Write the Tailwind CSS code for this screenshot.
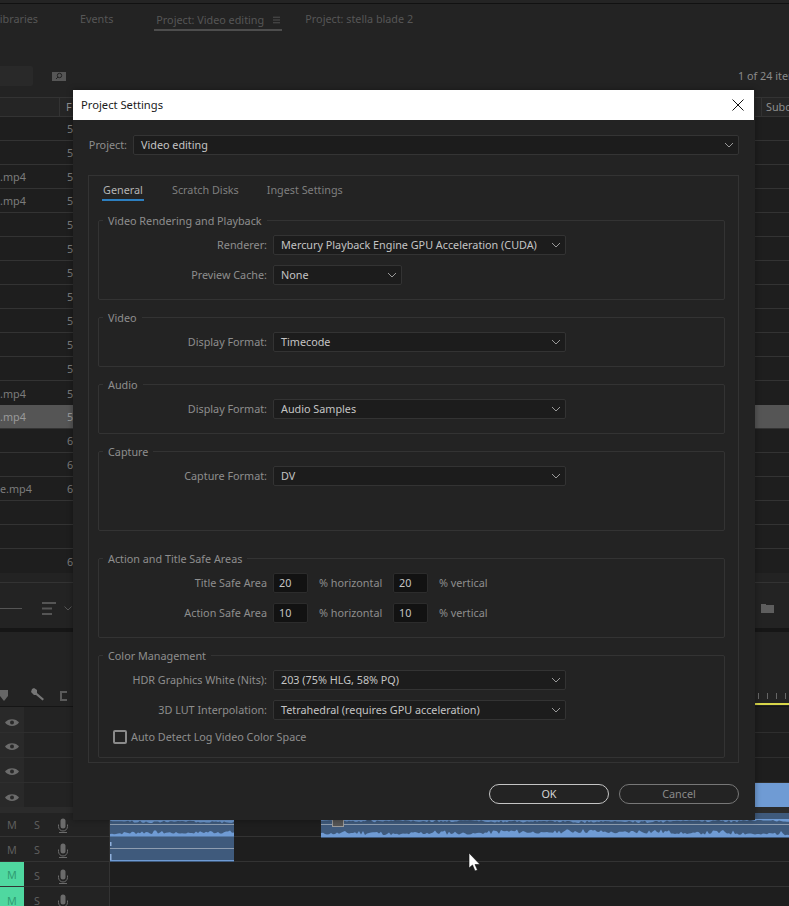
<!DOCTYPE html>
<html>
<head>
<meta charset="utf-8">
<script src="https://cdn.jsdelivr.net/npm/@tailwindcss/browser@4"></script>
</head>
<body class="bg-[#1e1e1e]">
<div class="relative w-[789px] h-[906px] overflow-hidden bg-[#1e1e1e] font-['Noto_Sans',sans-serif] text-[10.8px] leading-none text-[#8e8e8e]">

  <!-- Application behind the dialog -->
  <div class="flex flex-col w-full h-full [&>*]:shrink-0">
    <div class="h-[3px] bg-[#242424]"></div>
    <div class="h-[1px] bg-[#111111]"></div>
    <div class="h-[93px] bg-[#232323] flex flex-col">
      <div class="flex h-[26px] items-end text-[#565656]">
        <span class="w-[88px] -ml-[8px] h-[20px] pt-[4px] text-right pr-[42px] whitespace-nowrap">Libraries</span>
        <span class="h-[20px] pt-[4px]">Events</span>
        <div class="ml-[41px] w-[128px] h-[22px] pt-[6px] pl-[2px] flex gap-[9px] border-b-2 border-[#4d4d4d] relative -mb-[1px] whitespace-nowrap">
          <span>Project: Video editing</span>
          <svg width="9" height="8" viewBox="0 0 9 8" class="mt-[1px] ml-auto mr-[2px]"><path d="M0 .5h9M0 4h9M0 7.500h9" stroke="#5c5c5c"/></svg>
        </div>
        <span class="ml-[23px] h-[20px] pt-[4px]">Project: stella blade 2</span>
      </div>
      <div class="flex items-center h-[20px] mt-[36px]">
        <div class="w-[33px] h-[20px] bg-[#292929] rounded-r-[2px]"></div>
        <div class="ml-[19px] relative w-[14px] h-[9px] bg-[#565656] flex items-center justify-center">
          <svg width="8" height="8" viewBox="0 0 8 8"><circle cx="4.500" cy="3.500" r="2.200" fill="none" stroke="#222"/><path d="M3 5 1 7" stroke="#222"/></svg>
        </div>
        <span class="ml-auto text-[#8a8a8a] whitespace-nowrap w-[51px] overflow-hidden">1 of 24 items</span>
      </div>
    </div>
    <div class="h-[20px] bg-[#252525] border-y border-[#333333] flex items-center relative">
      <div class="w-[60px] h-full border-r border-[#333333]"></div>
      <span class="ml-[6px]">F</span>
      <div class="ml-auto w-[28px] h-full border-l border-[#333333] pl-[4px] pt-[4px] overflow-hidden whitespace-nowrap">Subclip</div>
    </div>
    <div class="flex flex-col [&>*]:pt-[2px]">
      <div class="h-[24px] border-b border-[#333] flex items-center text-[#7c7c7c]"><span class="w-[67px]"></span><span>5</span></div>
      <div class="h-[24px] border-b border-[#333] flex items-center text-[#7c7c7c]"><span class="w-[67px]"></span><span>5</span></div>
      <div class="h-[24px] border-b border-[#333] flex items-center text-[#7c7c7c]"><span class="w-[67px]">.mp4</span><span>5</span></div>
      <div class="h-[24px] border-b border-[#333] flex items-center text-[#7c7c7c]"><span class="w-[67px]">.mp4</span><span>5</span></div>
      <div class="h-[24px] border-b border-[#333] flex items-center text-[#7c7c7c]"><span class="w-[67px]"></span><span>5</span></div>
      <div class="h-[24px] border-b border-[#333] flex items-center text-[#7c7c7c]"><span class="w-[67px]"></span><span>5</span></div>
      <div class="h-[24px] border-b border-[#333] flex items-center text-[#7c7c7c]"><span class="w-[67px]"></span><span>5</span></div>
      <div class="h-[24px] border-b border-[#333] flex items-center text-[#7c7c7c]"><span class="w-[67px]"></span><span>5</span></div>
      <div class="h-[24px] border-b border-[#333] flex items-center text-[#7c7c7c]"><span class="w-[67px]"></span><span>5</span></div>
      <div class="h-[24px] border-b border-[#333] flex items-center text-[#7c7c7c]"><span class="w-[67px]"></span><span>5</span></div>
      <div class="h-[24px] border-b border-[#333] flex items-center text-[#7c7c7c]"><span class="w-[67px]"></span><span>5</span></div>
      <div class="h-[24px] flex items-center text-[#7c7c7c]"><span class="w-[67px]">.mp4</span><span>5</span></div>
      <div class="h-[24px] bg-[#555555] border-b border-[#333] flex items-center text-[#9a9a9a]"><span class="w-[67px]">.mp4</span><span>5</span></div>
      <div class="h-[24px] border-b border-[#333] flex items-center text-[#7c7c7c]"><span class="w-[67px]"></span><span>6</span></div>
      <div class="h-[24px] border-b border-[#333] flex items-center text-[#7c7c7c]"><span class="w-[67px]"></span><span>6</span></div>
      <div class="h-[24px] border-b border-[#333] flex items-center text-[#7c7c7c]"><span class="w-[67px] whitespace-nowrap">e.mp4</span><span>6</span></div>
      <div class="h-[24px] border-b border-[#333] flex items-center text-[#7c7c7c]"></div>
      <div class="h-[24px] border-b border-[#333] flex items-center text-[#7c7c7c]"></div>
      <div class="h-[24px] flex items-center text-[#7c7c7c]"><span class="w-[67px]"></span><span>6</span></div>
    </div>
    <div class="h-[10px] bg-[#232323] border-b border-[#333]"></div>
    <div class="h-[45px] bg-[#232323] flex items-center">
      <div class="w-[22px] h-[1px] bg-[#555] mt-[5px]"></div>
      <svg width="14" height="13" viewBox="0 0 14 13" class="ml-[20px] mt-[5px]"><path d="M0 1h14M0 6.500h10M0 12h10" stroke="#555" stroke-width="2"/></svg>
      <svg width="8" height="5" viewBox="0 0 8 5" class="ml-[8px] mt-[5px]"><path d="M.5.500 4 4 7.500.500" fill="none" stroke="#555"/></svg>
      <svg width="13" height="10" viewBox="0 0 13 10" class="ml-auto mr-[15px] mt-[5px]"><path d="M0 1h5v1h8v8H0z" fill="#5e5e5e"/></svg>
    </div>
    <div class="h-[4px] bg-[#161616]"></div>
    <div class="h-[74px] bg-[#232323] relative flex items-end pb-[5px]">
      <svg width="9" height="11" viewBox="0 0 9 11" class="ml-0"><path d="M0 0h8v6L4 11 0 6z" fill="#666"/></svg>
      <svg width="14" height="14" viewBox="0 0 14 14" class="ml-[22px]"><path d="M1 2 3 1l3 2v3l7 6-1.500 1.500L5 8H3L0 5z" fill="#767676"/></svg>
      <svg width="7" height="10" viewBox="0 0 7 10" class="ml-[15px]"><path d="M7 1H1v8h6" fill="none" stroke="#5a5a5a" stroke-width="2"/></svg>
      <div class="ml-auto w-[35px] h-[6px] flex gap-[8px] pl-[4px] items-start mb-[2px]">
        <div class="w-px h-[6px] bg-[#666]"></div><div class="w-px h-[6px] bg-[#666]"></div><div class="w-px h-[6px] bg-[#666]"></div><div class="w-px h-[6px] bg-[#666]"></div>
      </div>
    </div>
    <div class="h-[1px] bg-[#151515]"></div>
    <!-- video tracks -->
    <div class="flex flex-col h-[100px]">
      <div class="h-[26px] flex border-b border-[#2e2e2e]"><div class="w-[24px] bg-[#292929] flex items-center justify-center pt-[5px]"><svg width="14" height="9" viewBox="0 0 14 9"><path d="M0 4.500C3 0 11 0 14 4.500 11 9 3 9 0 4.500z" fill="#6b6b6b"/><circle cx="7" cy="4.500" r="2" fill="#292929"/></svg></div><div class="w-[86px] bg-[#232323] border-r border-[#2e2e2e]"></div></div>
      <div class="h-[25px] flex border-b border-[#2e2e2e]"><div class="w-[24px] bg-[#292929] flex items-center justify-center pt-[3px]"><svg width="14" height="9" viewBox="0 0 14 9"><path d="M0 4.500C3 0 11 0 14 4.500 11 9 3 9 0 4.500z" fill="#6b6b6b"/><circle cx="7" cy="4.500" r="2" fill="#292929"/></svg></div><div class="w-[86px] bg-[#232323] border-r border-[#2e2e2e]"></div></div>
      <div class="h-[25px] flex border-b border-[#2e2e2e]"><div class="w-[24px] bg-[#292929] flex items-center justify-center pt-[3px]"><svg width="14" height="9" viewBox="0 0 14 9"><path d="M0 4.500C3 0 11 0 14 4.500 11 9 3 9 0 4.500z" fill="#6b6b6b"/><circle cx="7" cy="4.500" r="2" fill="#292929"/></svg></div><div class="w-[86px] bg-[#232323] border-r border-[#2e2e2e]"></div></div>
      <div class="h-[24px] flex"><div class="w-[24px] bg-[#292929] flex items-center justify-center pt-[4px]"><svg width="14" height="9" viewBox="0 0 14 9"><path d="M0 4.500C3 0 11 0 14 4.500 11 9 3 9 0 4.500z" fill="#6b6b6b"/><circle cx="7" cy="4.500" r="2" fill="#292929"/></svg></div><div class="w-[86px] bg-[#232323] border-r border-[#2e2e2e]"></div><div class="ml-auto w-[35px] h-[24px] bg-[#6f9bd4]"></div></div>
    </div>
    <div class="h-[6px] bg-[#2b2b2b]"></div>
    <!-- audio tracks -->
    <div class="flex flex-col">
      <div class="h-[24px] flex border-b border-[#333]">
        <div class="w-[110px] bg-[#232323] flex items-center border-r border-[#2e2e2e] text-[#5e5e5e]"><span class="w-[24px] text-center pt-[2px]">M</span><span class="w-[26px] text-center pt-[2px]">S</span><svg width="10" height="15" viewBox="0 0 10 15" class="ml-[8px] mt-[2px]"><path d="M2.500 3a2.500 2.500 0 0 1 5 0v5a2.500 2.500 0 0 1-5 0z" fill="#6b6b6b"/><path d="M.5 6.500v2a4.500 4.500 0 0 0 9 0v-2M1 14.500h8" fill="none" stroke="#6b6b6b"/></svg></div>
      </div>
      <div class="h-[25px] flex border-b border-[#333]">
        <div class="w-[110px] bg-[#232323] flex items-center border-r border-[#2e2e2e] text-[#5e5e5e]"><span class="w-[24px] text-center pt-[2px]">M</span><span class="w-[26px] text-center pt-[2px]">S</span><svg width="10" height="15" viewBox="0 0 10 15" class="ml-[8px] mt-[2px]"><path d="M2.500 3a2.500 2.500 0 0 1 5 0v5a2.500 2.500 0 0 1-5 0z" fill="#6b6b6b"/><path d="M.5 6.500v2a4.500 4.500 0 0 0 9 0v-2M1 14.500h8" fill="none" stroke="#6b6b6b"/></svg></div>
      </div>
      <div class="h-[25px] flex border-b border-[#333]">
        <div class="w-[110px] bg-[#232323] flex items-center border-r border-[#333] text-[#5e5e5e]"><span class="w-[24px] h-full flex items-center justify-center bg-[#4fd8a0] text-[#2f9c72] pt-[3px]">M</span><span class="w-[26px] text-center pt-[4px]">S</span><svg width="10" height="15" viewBox="0 0 10 15" class="ml-[8px] mt-[4px]"><path d="M2.500 3a2.500 2.500 0 0 1 5 0v5a2.500 2.500 0 0 1-5 0z" fill="#6b6b6b"/><path d="M.5 6.500v2a4.500 4.500 0 0 0 9 0v-2M1 14.500h8" fill="none" stroke="#6b6b6b"/></svg></div>
      </div>
      <div class="h-[25px] flex">
        <div class="w-[110px] bg-[#232323] flex items-center border-r border-[#333] text-[#5e5e5e]"><span class="w-[24px] h-full flex items-center justify-center bg-[#4fd8a0] text-[#2f9c72] pt-[3px]">M</span><span class="w-[26px] text-center pt-[4px]">S</span><svg width="10" height="15" viewBox="0 0 10 15" class="ml-[8px] mt-[4px]"><path d="M2.500 3a2.500 2.500 0 0 1 5 0v5a2.500 2.500 0 0 1-5 0z" fill="#6b6b6b"/><path d="M.5 6.500v2a4.500 4.500 0 0 0 9 0v-2M1 14.500h8" fill="none" stroke="#6b6b6b"/></svg></div>
      </div>
    </div>
  </div>

  <!-- Overlays on the timeline / right edge -->
  <div class="absolute left-[754px] top-[703px] w-[35px] h-[2px] bg-[#d8d64a]"></div>
  <svg class="absolute left-[110px] top-[813px]" width="679" height="50" viewBox="0 0 679 50">
    <rect x="0" y="0" width="124" height="49" fill="#3f5a7c"/>
    <rect x="211" y="0" width="468" height="25" fill="#3f5a7c"/>
    <path id="w1" fill="#6f9bd4"/>
    <path id="w2" fill="#6f9bd4"/>
    <path id="w3" fill="#6f9bd4"/>
    <path id="w4" fill="#6f9bd4"/>
    <rect x="0" y="11" width="124" height="1" fill="#8e9db0"/>
    <rect x="211" y="11" width="468" height="1" fill="#8e9db0"/>
    <rect x="0" y="35" width="124" height="1" fill="#8e9db0"/>
    <rect x="0" y="47" width="124" height="1" fill="#6f9bd4"/>
    <path d="M0 29h1.500v4H0zM0 41h1.500v6H0z" fill="#8fb0dc"/>
    <rect x="222.500" y="6.500" width="11" height="7" fill="#555" stroke="#999"/>
  </svg>
  <svg class="absolute left-[468px] top-[853px]" width="13" height="19" viewBox="0 0 13 19"><path d="M1 0v15l3.500-3 2.500 6 2.500-1-2.500-5.500H12z" fill="#fff" stroke="#111" stroke-width=".6"/></svg>

  <!-- Project Settings dialog -->
  <div class="absolute left-[73px] top-[90px] w-[682px] h-[730px] bg-[#232323] flex flex-col shadow-[0_0_6px_rgba(0,0,0,0.35)]">
    <div class="h-[30px] bg-white flex items-center justify-between pl-[8px] pr-[10px] w-[681px] text-[#1a1a1a] text-[11.2px]">
      <span>Project Settings</span>
      <svg width="12" height="12" viewBox="0 0 12 12" class="-mt-px"><path d="M.5.500l11 11M11.500.500l-11 11" stroke="#111" stroke-width="1"/></svg>
    </div>
    <div class="flex flex-col pl-[15px] pt-[15px]">
      <div class="flex items-center h-[20px] w-[651px]">
        <span class="w-[45px] text-right pr-[6px]">Project:</span>
        <div class="flex-1 h-[20px] bg-[#1c1c1c] border border-[#343434] rounded-[2px] flex items-center justify-between pl-[7px] pr-[4px] text-[#c4c4c4]">
          <span>Video editing</span>
          <svg width="10" height="6" viewBox="0 0 10 6"><path d="M1 1l4 4 4-4" fill="none" stroke="#999"/></svg>
        </div>
      </div>
      <div class="mt-[20px] w-[651px] h-[588px] border border-[#333333] flex flex-col">
        <div class="flex h-[44px] pl-[13px]">
          <div class="w-[42px] h-[25px] pt-[9px] text-center text-[#b4b4b4] border-b-2 border-[#2d7fc0]">General</div>
          <div class="ml-[28px] pt-[9px] text-[#7f7f7f]">Scratch Disks</div>
          <div class="ml-[28px] pt-[9px] text-[#7f7f7f]">Ingest Settings</div>
        </div>
        <div class="flex flex-col pl-[9px] w-[636px]">
          <!-- Video Rendering -->
          <div class="h-[80px] border border-[#333333] rounded-[2px] flex flex-col gap-[10px]">
            <div class="-mt-[8px] ml-[4px] w-fit px-[5px] h-[16px] leading-[16px] bg-[#232323] -mb-[4px]">Video Rendering and Playback</div>
            <div class="flex items-center h-[20px]">
              <span class="w-[168px] text-right">Renderer:</span>
              <div class="ml-[6px] w-[293px] h-[20px] bg-[#1c1c1c] border border-[#333] rounded-[2px] flex items-center justify-between pl-[7px] pr-[4px] text-[#c4c4c4]"><span class="whitespace-nowrap">Mercury Playback Engine GPU Acceleration (CUDA)</span><svg width="10" height="6" viewBox="0 0 10 6"><path d="M1 1l4 4 4-4" fill="none" stroke="#999"/></svg></div>
            </div>
            <div class="flex items-center h-[20px]">
              <span class="w-[168px] text-right">Preview Cache:</span>
              <div class="ml-[6px] w-[129px] h-[20px] bg-[#1c1c1c] border border-[#333] rounded-[2px] flex items-center justify-between pl-[7px] pr-[4px] text-[#c4c4c4]"><span>None</span><svg width="10" height="6" viewBox="0 0 10 6"><path d="M1 1l4 4 4-4" fill="none" stroke="#999"/></svg></div>
            </div>
          </div>
          <!-- Video -->
          <div class="mt-[17px] h-[50px] border border-[#333333] rounded-[2px] flex flex-col gap-[10px]">
            <div class="-mt-[8px] ml-[4px] w-fit px-[5px] h-[16px] leading-[16px] bg-[#232323] -mb-[4px]">Video</div>
            <div class="flex items-center h-[20px]">
              <span class="w-[168px] text-right">Display Format:</span>
              <div class="ml-[6px] w-[293px] h-[20px] bg-[#1c1c1c] border border-[#333] rounded-[2px] flex items-center justify-between pl-[7px] pr-[4px] text-[#c4c4c4]"><span>Timecode</span><svg width="10" height="6" viewBox="0 0 10 6"><path d="M1 1l4 4 4-4" fill="none" stroke="#999"/></svg></div>
            </div>
          </div>
          <!-- Audio -->
          <div class="mt-[17px] h-[50px] border border-[#333333] rounded-[2px] flex flex-col gap-[10px]">
            <div class="-mt-[8px] ml-[4px] w-fit px-[5px] h-[16px] leading-[16px] bg-[#232323] -mb-[4px]">Audio</div>
            <div class="flex items-center h-[20px]">
              <span class="w-[168px] text-right">Display Format:</span>
              <div class="ml-[6px] w-[293px] h-[20px] bg-[#1c1c1c] border border-[#333] rounded-[2px] flex items-center justify-between pl-[7px] pr-[4px] text-[#c4c4c4]"><span>Audio Samples</span><svg width="10" height="6" viewBox="0 0 10 6"><path d="M1 1l4 4 4-4" fill="none" stroke="#999"/></svg></div>
            </div>
          </div>
          <!-- Capture -->
          <div class="mt-[17px] h-[80px] border border-[#333333] rounded-[2px] flex flex-col gap-[10px]">
            <div class="-mt-[8px] ml-[4px] w-fit px-[5px] h-[16px] leading-[16px] bg-[#232323] -mb-[4px]">Capture</div>
            <div class="flex items-center h-[20px]">
              <span class="w-[168px] text-right">Capture Format:</span>
              <div class="ml-[6px] w-[293px] h-[20px] bg-[#1c1c1c] border border-[#333] rounded-[2px] flex items-center justify-between pl-[7px] pr-[4px] text-[#c4c4c4]"><span>DV</span><svg width="10" height="6" viewBox="0 0 10 6"><path d="M1 1l4 4 4-4" fill="none" stroke="#999"/></svg></div>
            </div>
          </div>
          <!-- Safe areas -->
          <div class="mt-[27px] h-[80px] border border-[#333333] rounded-[2px] flex flex-col gap-[10px]">
            <div class="-mt-[8px] ml-[4px] w-fit px-[5px] h-[16px] leading-[16px] bg-[#232323] -mb-[4px]">Action and Title Safe Areas</div>
            <div class="flex items-center h-[20px]">
              <span class="w-[168px] text-right">Title Safe Area</span>
              <div class="ml-[6px] w-[35px] h-[20px] bg-[#121212] border border-[#2c2c2c] rounded-[2px] flex items-center pl-[5px] text-[#c4c4c4]">20</div>
              <span class="ml-[11px] w-[74px]">% horizontal</span>
              <div class="w-[35px] h-[20px] bg-[#121212] border border-[#2c2c2c] rounded-[2px] flex items-center pl-[5px] text-[#c4c4c4]">20</div>
              <span class="ml-[11px]">% vertical</span>
            </div>
            <div class="flex items-center h-[20px]">
              <span class="w-[168px] text-right">Action Safe Area</span>
              <div class="ml-[6px] w-[35px] h-[20px] bg-[#121212] border border-[#2c2c2c] rounded-[2px] flex items-center pl-[5px] text-[#c4c4c4]">10</div>
              <span class="ml-[11px] w-[74px]">% horizontal</span>
              <div class="w-[35px] h-[20px] bg-[#121212] border border-[#2c2c2c] rounded-[2px] flex items-center pl-[5px] text-[#c4c4c4]">10</div>
              <span class="ml-[11px]">% vertical</span>
            </div>
          </div>
          <!-- Color Management -->
          <div class="mt-[17px] h-[103px] border border-[#333333] rounded-[2px] flex flex-col gap-[10px]">
            <div class="-mt-[8px] ml-[4px] w-fit px-[5px] h-[16px] leading-[16px] bg-[#232323] -mb-[4px]">Color Management</div>
            <div class="flex items-center h-[20px]">
              <span class="w-[168px] text-right">HDR Graphics White (Nits):</span>
              <div class="ml-[6px] w-[293px] h-[20px] bg-[#1c1c1c] border border-[#333] rounded-[2px] flex items-center justify-between pl-[7px] pr-[4px] text-[#c4c4c4]"><span>203 (75% HLG, 58% PQ)</span><svg width="10" height="6" viewBox="0 0 10 6"><path d="M1 1l4 4 4-4" fill="none" stroke="#999"/></svg></div>
            </div>
            <div class="flex items-center h-[20px]">
              <span class="w-[168px] text-right">3D LUT Interpolation:</span>
              <div class="ml-[6px] w-[293px] h-[20px] bg-[#1c1c1c] border border-[#333] rounded-[2px] flex items-center justify-between pl-[7px] pr-[4px] text-[#c4c4c4]"><span>Tetrahedral (requires GPU acceleration)</span><svg width="10" height="6" viewBox="0 0 10 6"><path d="M1 1l4 4 4-4" fill="none" stroke="#999"/></svg></div>
            </div>
            <div class="flex items-center h-[14px] pl-[14px]">
              <div class="w-[14px] h-[14px] border-2 border-[#8a8a8a] rounded-[2px]"></div>
              <span class="ml-[4px]">Auto Detect Log Video Color Space</span>
            </div>
          </div>
        </div>
      </div>
      <div class="flex mt-[21px] gap-[10px] pl-[401px]">
        <div class="w-[120px] h-[20px] rounded-full border border-[#c4c4c4] flex items-center justify-center text-[#d4d4d4]">OK</div>
        <div class="w-[120px] h-[20px] rounded-full border border-[#777777] flex items-center justify-center text-[#8a8a8a]">Cancel</div>
      </div>
    </div>
  </div>
</div>
<script>
  function wave(id, x0, x1, base, amp, up, seed) {
    var d = "M" + x0 + " " + base, s = seed;
    for (var x = x0; x <= x1; x += 2) {
      s = (s * 9301 + 49297) % 233280;
      var r = s / 233280;
      var y = base + (up ? -1 : 1) * (amp * 0.45 + amp * 0.6 * r * (0.4 + Math.abs(Math.sin(x / 23))) + amp * 0.15 * Math.sin(x / 61));
      d += "L" + x + " " + y.toFixed(1);
    }
    d += "L" + x1 + " " + base + "Z";
    document.getElementById(id).setAttribute("d", d);
  }
  wave("w1", 0, 124, 23.5, 4.500, true, 7);
  wave("w2", 211, 679, 24, 6, true, 11);
  wave("w3", 0, 124, 6, 3, false, 23);
  wave("w4", 211, 679, 6, 3, false, 31);
</script>
</body>
</html>
